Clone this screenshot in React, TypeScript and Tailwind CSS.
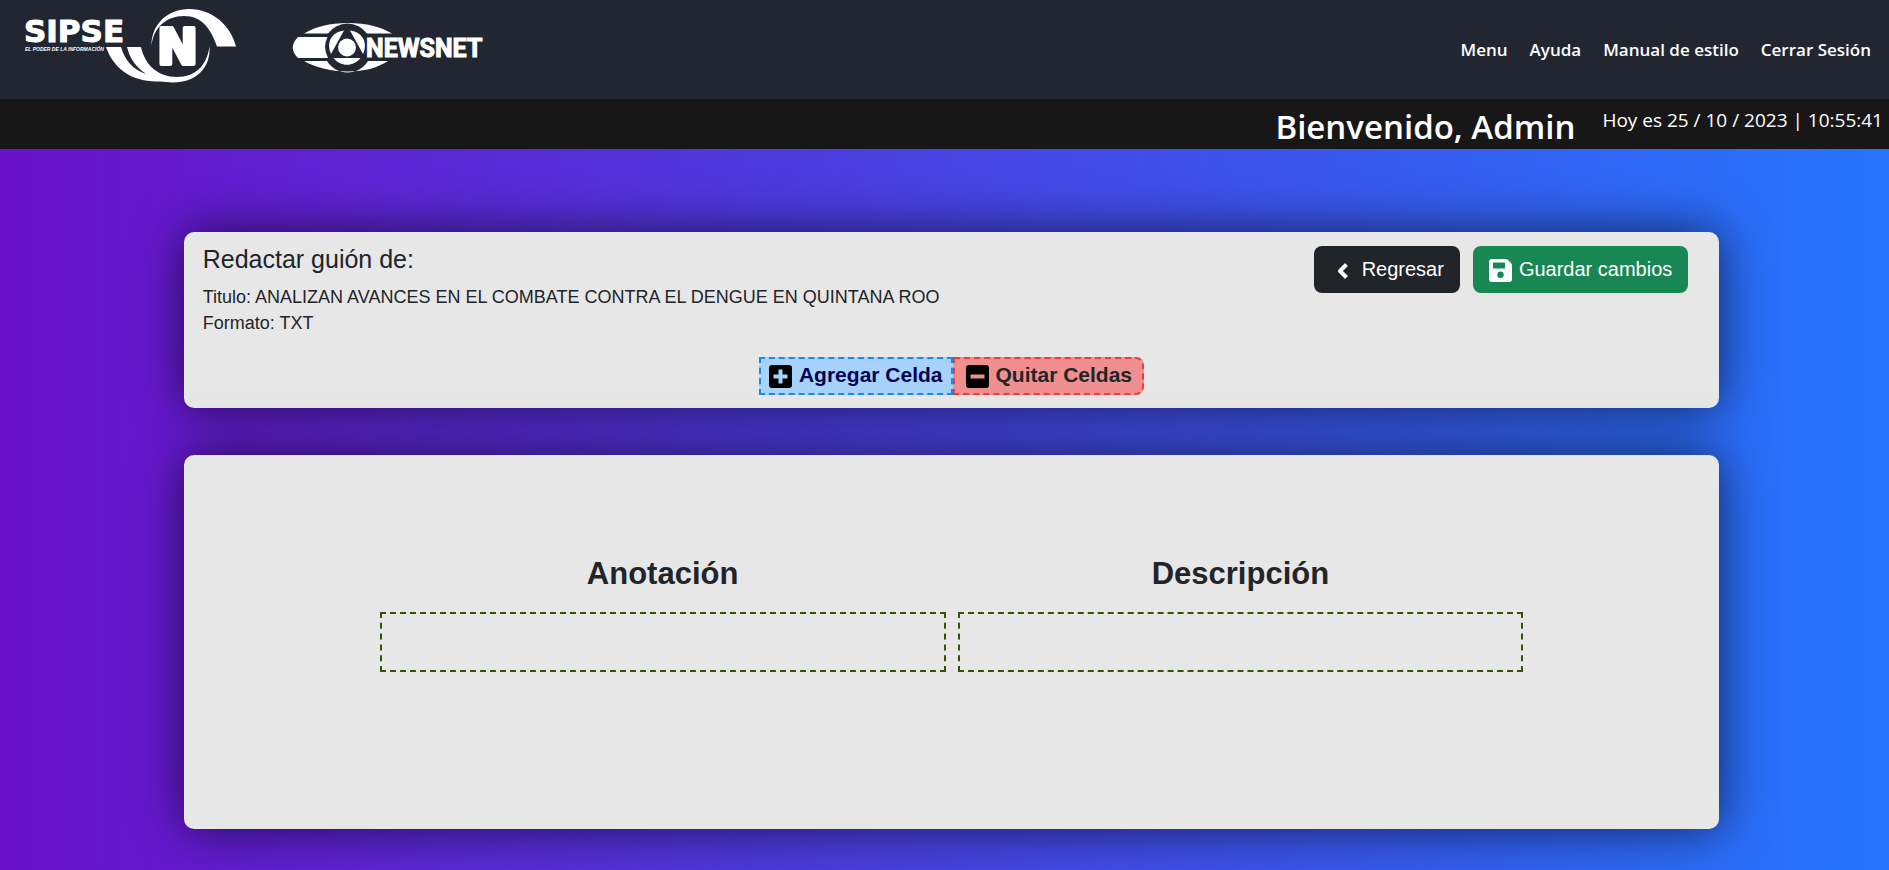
import { ReactNode } from "react";

function SipseLogo() {
  return (
    <svg width="216" height="84" viewBox="22 4 216 84" role="img" aria-label="SIPSE, El poder de la información" fill="#fff">
      <text x="24" y="42" fontFamily="'DejaVu Sans'" fontWeight="700" fontSize="31" stroke="#fff" strokeWidth="1">SIPSE</text>
      <text x="25" y="51" fontFamily="'Liberation Sans'" fontWeight="700" fontStyle="italic" fontSize="5">EL PODER DE LA INFORMACIÓN</text>
      <path d="M151.500 46.500C151 24 168 9 189 9C213 9 231 26 236 46.500H217C211 29 202 16 184 16C166 16 153 28 151.500 46.500Z" />
      <path d="M127 47H141C145 65 158 77 177 77C195 77 207 66 209.500 46C211 68 196 82.500 173 82.500C168 82.500 164 81.500 160 81.500C130 82.500 113 67 106 47H121C125 61 134 70 146 74C136 67 130 59 127 47Z" />
      <text x="157" y="64" fontFamily="'DejaVu Sans'" fontWeight="700" fontSize="49" stroke="#fff" strokeWidth="4" strokeLinejoin="round">N</text>
    </svg>
  );
}

function NewsnetLogo() {
  return (
    <svg width="194" height="52" viewBox="292 22 194 52" role="img" aria-label="NewsNet" fill="#fff">
      <path d="M304 33.500C315 27 330 23 348 23C366 23 381 27 392 33.500H367A24 24 0 0 0 328 33.500Z" />
      <path d="M304 61C315 67 330 71.500 348 71.500C364 71.500 377 68 388 61H368A24 24 0 0 1 327 61Z" />
      <path d="M298 37H327.500A23 23 0 0 0 328 58H298C291 51 291 44 298 37Z" />
      <circle cx="347" cy="47.500" r="9" />
      <path d="M344 30.500L331 54C326 43 331 32 344 30.500Z" />
      <path d="M350 30.500L363 54C368 43 363 32 350 30.500Z" />
      <path d="M333.500 58H360.500C354 67 340 67 333.500 58Z" />
      <text x="366" y="57" fontFamily="Roboto, 'Open Sans'" fontWeight="700" fontSize="25" stroke="#fff" strokeWidth="1">NEWSNET</text>
    </svg>
  );
}

function NavLink({ children }: { children: ReactNode }) {
  return (
    <a href="#" className="text-[17px] leading-6 font-semibold text-white">
      {children}
    </a>
  );
}

function BoxIcon({ plus }: { plus?: boolean }) {
  return (
    <svg width="23" height="23" viewBox="0 0 23 23" aria-hidden="true">
      <rect width="23" height="23" rx="3" fill="#000" />
      <path d={plus ? "M4.500 11.500H18.500M11.500 4.500V18.500" : "M4.500 11.500H18.500"} className={plus ? "stroke-[#a6d2fb]" : "stroke-[#f08f8f]"} strokeWidth="4" />
    </svg>
  );
}

export default function App() {
  return (
    <div className="flex min-h-screen flex-col bg-[linear-gradient(to_right,#6a11cb,#2575fc)] font-['Liberation_Sans',Arial,sans-serif] text-[#212529]">
      <header className="font-['Open_Sans','Noto_Sans',sans-serif] text-white">
        <div className="flex h-[99px] items-center justify-between bg-[#212630] pr-[18px] pl-[22px]">
          <div className="flex items-center gap-[54px]">
            <div className="pb-2">
              <SipseLogo />
            </div>
            <div className="pb-1">
              <NewsnetLogo />
            </div>
          </div>
          <nav className="flex items-center gap-[22px]">
            <NavLink>Menu</NavLink>
            <NavLink>Ayuda</NavLink>
            <NavLink>Manual de estilo</NavLink>
            <NavLink>Cerrar Sesión</NavLink>
          </nav>
        </div>
        <div className="flex h-[50px] items-start justify-end gap-[27px] bg-[#171717] pr-[6px]">
          <h1 className="pt-2 text-[33px] leading-10 font-semibold">Bienvenido, Admin</h1>
          <p className="pt-[7px] text-[19px] leading-7">Hoy es 25 / 10 / 2023 | 10:55:41</p>
        </div>
      </header>

      <div className="pt-[83px] pb-[41px] pl-[14px]">
        <main className="mx-auto flex w-[81.9%] flex-col gap-[47px]">
          <section className="flex flex-col rounded-[10px] bg-[#e7e7e7] px-[19px] pt-[14px] pb-[13px] shadow-[0_0_50px_rgba(0,0,0,0.65)]">
            <div className="flex items-start justify-between pr-3">
              <div>
                <h2 className="mb-3 text-[25px] leading-[26px]">Redactar guión de:</h2>
                <p className="text-[18px] leading-[26px]">Titulo: ANALIZAN AVANCES EN EL COMBATE CONTRA EL DENGUE EN QUINTANA ROO</p>
                <p className="text-[18px] leading-[26px]">Formato: TXT</p>
              </div>
              <div className="flex gap-[13px]">
                <button type="button" className="flex h-[47px] items-center gap-[14px] rounded-lg bg-[#212529] pr-4 pl-[23px] text-xl text-white">
                  <svg width="11" height="16" viewBox="0 0 11 16" fill="none" stroke="currentColor" strokeWidth="4" strokeLinejoin="round" className="mt-0.5" aria-hidden="true">
                    <path d="M9.500 1.500L3 8L9.500 14.500" />
                  </svg>
                  <span className="pb-0.5">Regresar</span>
                </button>
                <button type="button" className="flex h-[47px] items-center gap-[7px] rounded-lg bg-[#198754] px-4 text-xl text-white">
                  <svg width="23" height="23" viewBox="0 0 23 23" fill="currentColor" fillRule="evenodd" className="mt-0.5" aria-hidden="true">
                    <path d="M3 0H16.500Q18 0 19 1L22 4Q23 5 23 6.500V20A3 3 0 0 1 20 23H3A3 3 0 0 1 0 20V3A3 3 0 0 1 3 0ZM4 3.500V9.500H16V3.500ZM11.500 12.500A3.200 3.200 0 1 0 11.500 18.900A3.200 3.200 0 1 0 11.500 12.500Z" />
                  </svg>
                  <span className="pb-0.5">Guardar cambios</span>
                </button>
              </div>
            </div>
            <div className="mt-[21px] flex justify-center">
              <button type="button" className="flex h-[38px] items-center gap-[7px] border-2 border-dashed border-[#1589ee] bg-[#a6d2fb] px-2 text-[21px] font-bold text-[#030352]">
                <BoxIcon plus />
                <span className="pb-0.5">Agregar Celda</span>
              </button>
              <button type="button" className="flex h-[38px] items-center gap-[7px] rounded-r-lg border-2 border-dashed border-[#ee3a3a] bg-[#f08f8f] pr-[10px] pl-[11px] text-[21px] font-bold">
                <BoxIcon />
                <span className="pb-0.5">Quitar Celdas</span>
              </button>
            </div>
          </section>

          <section className="rounded-[10px] bg-[#e7e7e7] px-[196px] pt-[99px] pb-[157px] shadow-[0_0_50px_rgba(0,0,0,0.65)]">
            <div className="grid grid-cols-2 gap-x-3">
              {["Anotación", "Descripción"].map((label, i) => (
                <div key={label}>
                  <label htmlFor={`celda-${i}`} className="mb-[18px] block text-center text-[31px] leading-10 font-bold">
                    {label}
                  </label>
                  <textarea id={`celda-${i}`} className="block h-[60px] w-full resize-none border-2 border-dashed border-[#355404] bg-transparent p-2" />
                </div>
              ))}
            </div>
          </section>
        </main>
      </div>
    </div>
  );
}
